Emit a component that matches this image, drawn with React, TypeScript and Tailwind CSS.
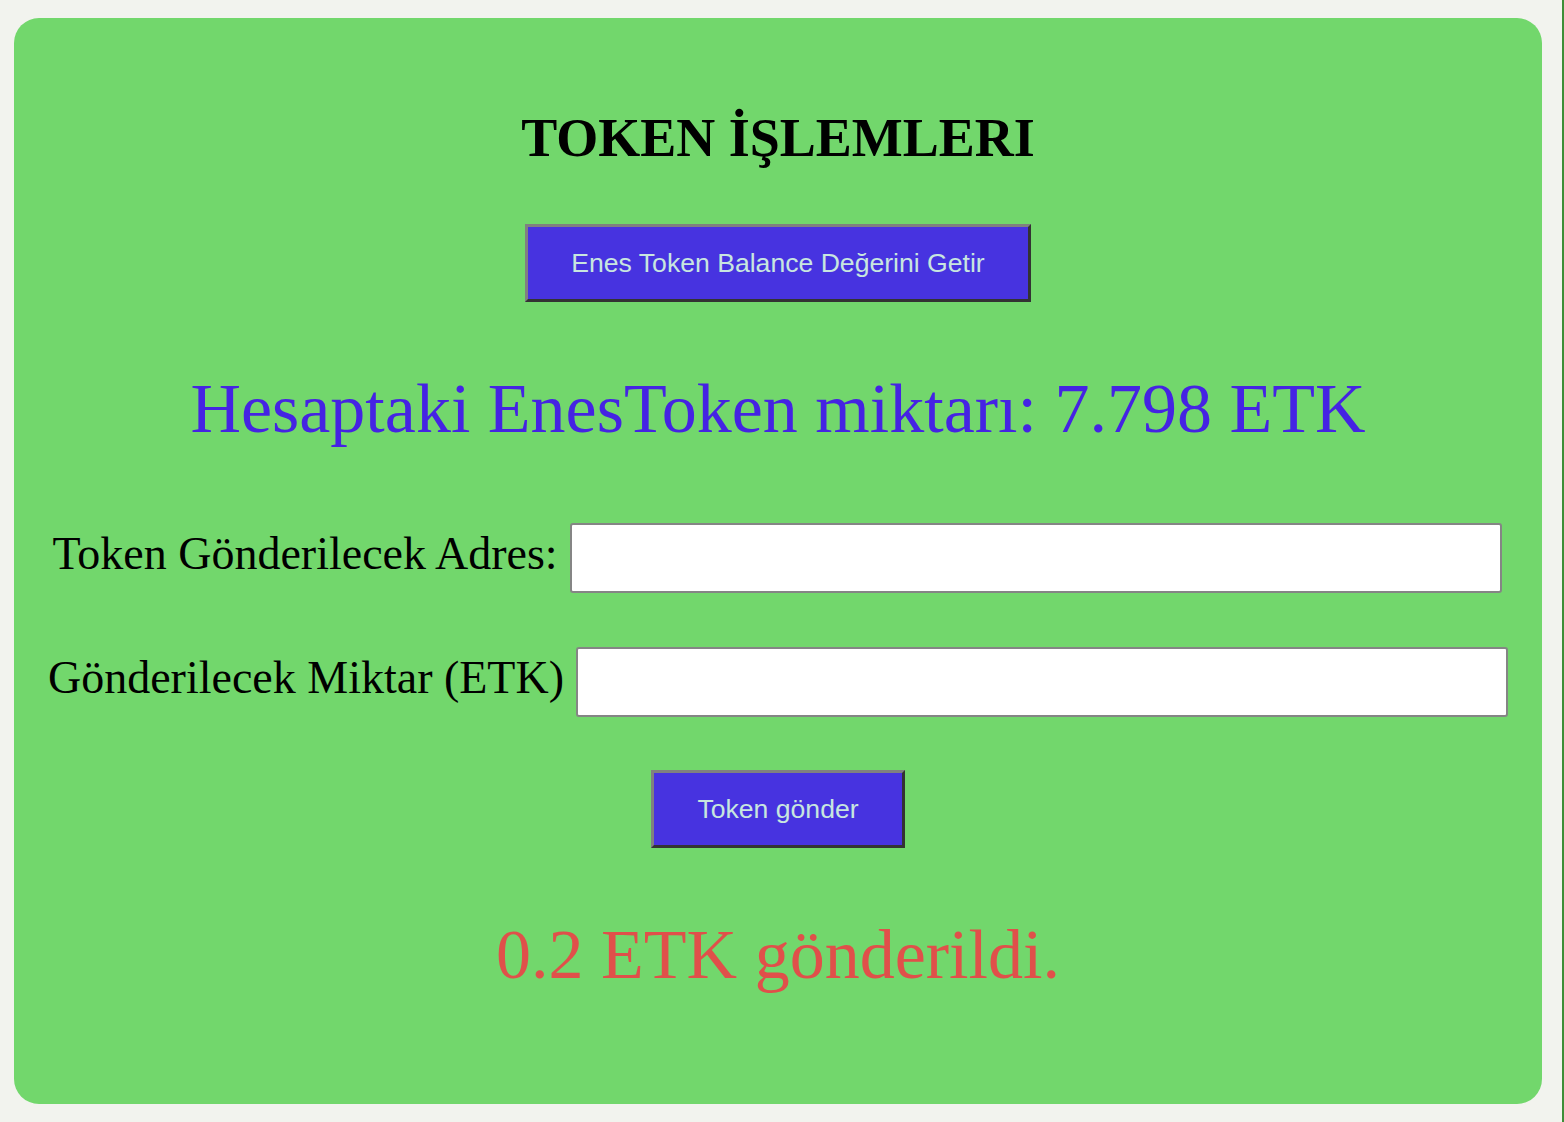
import React from "react";

export default function App() {
  const serif = { fontFamily: '"Liberation Serif", "Times New Roman", serif' };
  const sans = { fontFamily: '"Liberation Sans", Arial, sans-serif' };
  return (
    <div className="min-h-screen bg-[#f2f3ee] border-r-2 border-[#3e8e38] pt-[18px] pb-[18px] pl-[14px] pr-[20px]">
      <div
        className="h-[1086px] rounded-[25px] bg-[#72d76c] flex flex-col items-center pt-[93px]"
        style={serif}
      >
        <h1 className="text-[54px] leading-none font-bold text-black">TOKEN İŞLEMLERI</h1>
        <button
          className="mt-[59px] px-[43px] py-[21px] text-[26.6px] leading-[30px] bg-[#4733e0] text-[#c8e6df] border-[3px] border-t-[#808080] border-l-[#808080] border-b-[#333333] border-r-[#333333]"
          style={sans}
        >
          Enes Token Balance Değerini Getir
        </button>
        <p className="mt-[72px] text-[70px] leading-none text-[#4523e3]">
          Hesaptaki EnesToken miktarı: 7.798 ETK
        </p>
        <div className="mt-[79px] flex items-center gap-[12px] -translate-x-[1px]">
          <label className="text-[46px] leading-none text-black pb-[9px]">Token Gönderilecek Adres:</label>
          <input className="w-[932px] h-[70px] bg-white border-2 border-[#858585] rounded-[3px]" />
        </div>
        <div className="mt-[54px] flex items-center gap-[12px]">
          <label className="text-[46px] leading-none text-black pb-[9px]">Gönderilecek Miktar (ETK)</label>
          <input className="w-[932px] h-[70px] bg-white border-2 border-[#858585] rounded-[3px]" />
        </div>
        <button
          className="mt-[53px] px-[43px] py-[21px] text-[26.6px] leading-[30px] bg-[#4733e0] text-[#c8e6df] border-[3px] border-t-[#808080] border-l-[#808080] border-b-[#333333] border-r-[#333333]"
          style={sans}
        >
          Token gönder
        </button>
        <p className="mt-[72px] text-[70px] leading-none text-[#e0504a]">0.2 ETK gönderildi.</p>
      </div>
    </div>
  );
}
